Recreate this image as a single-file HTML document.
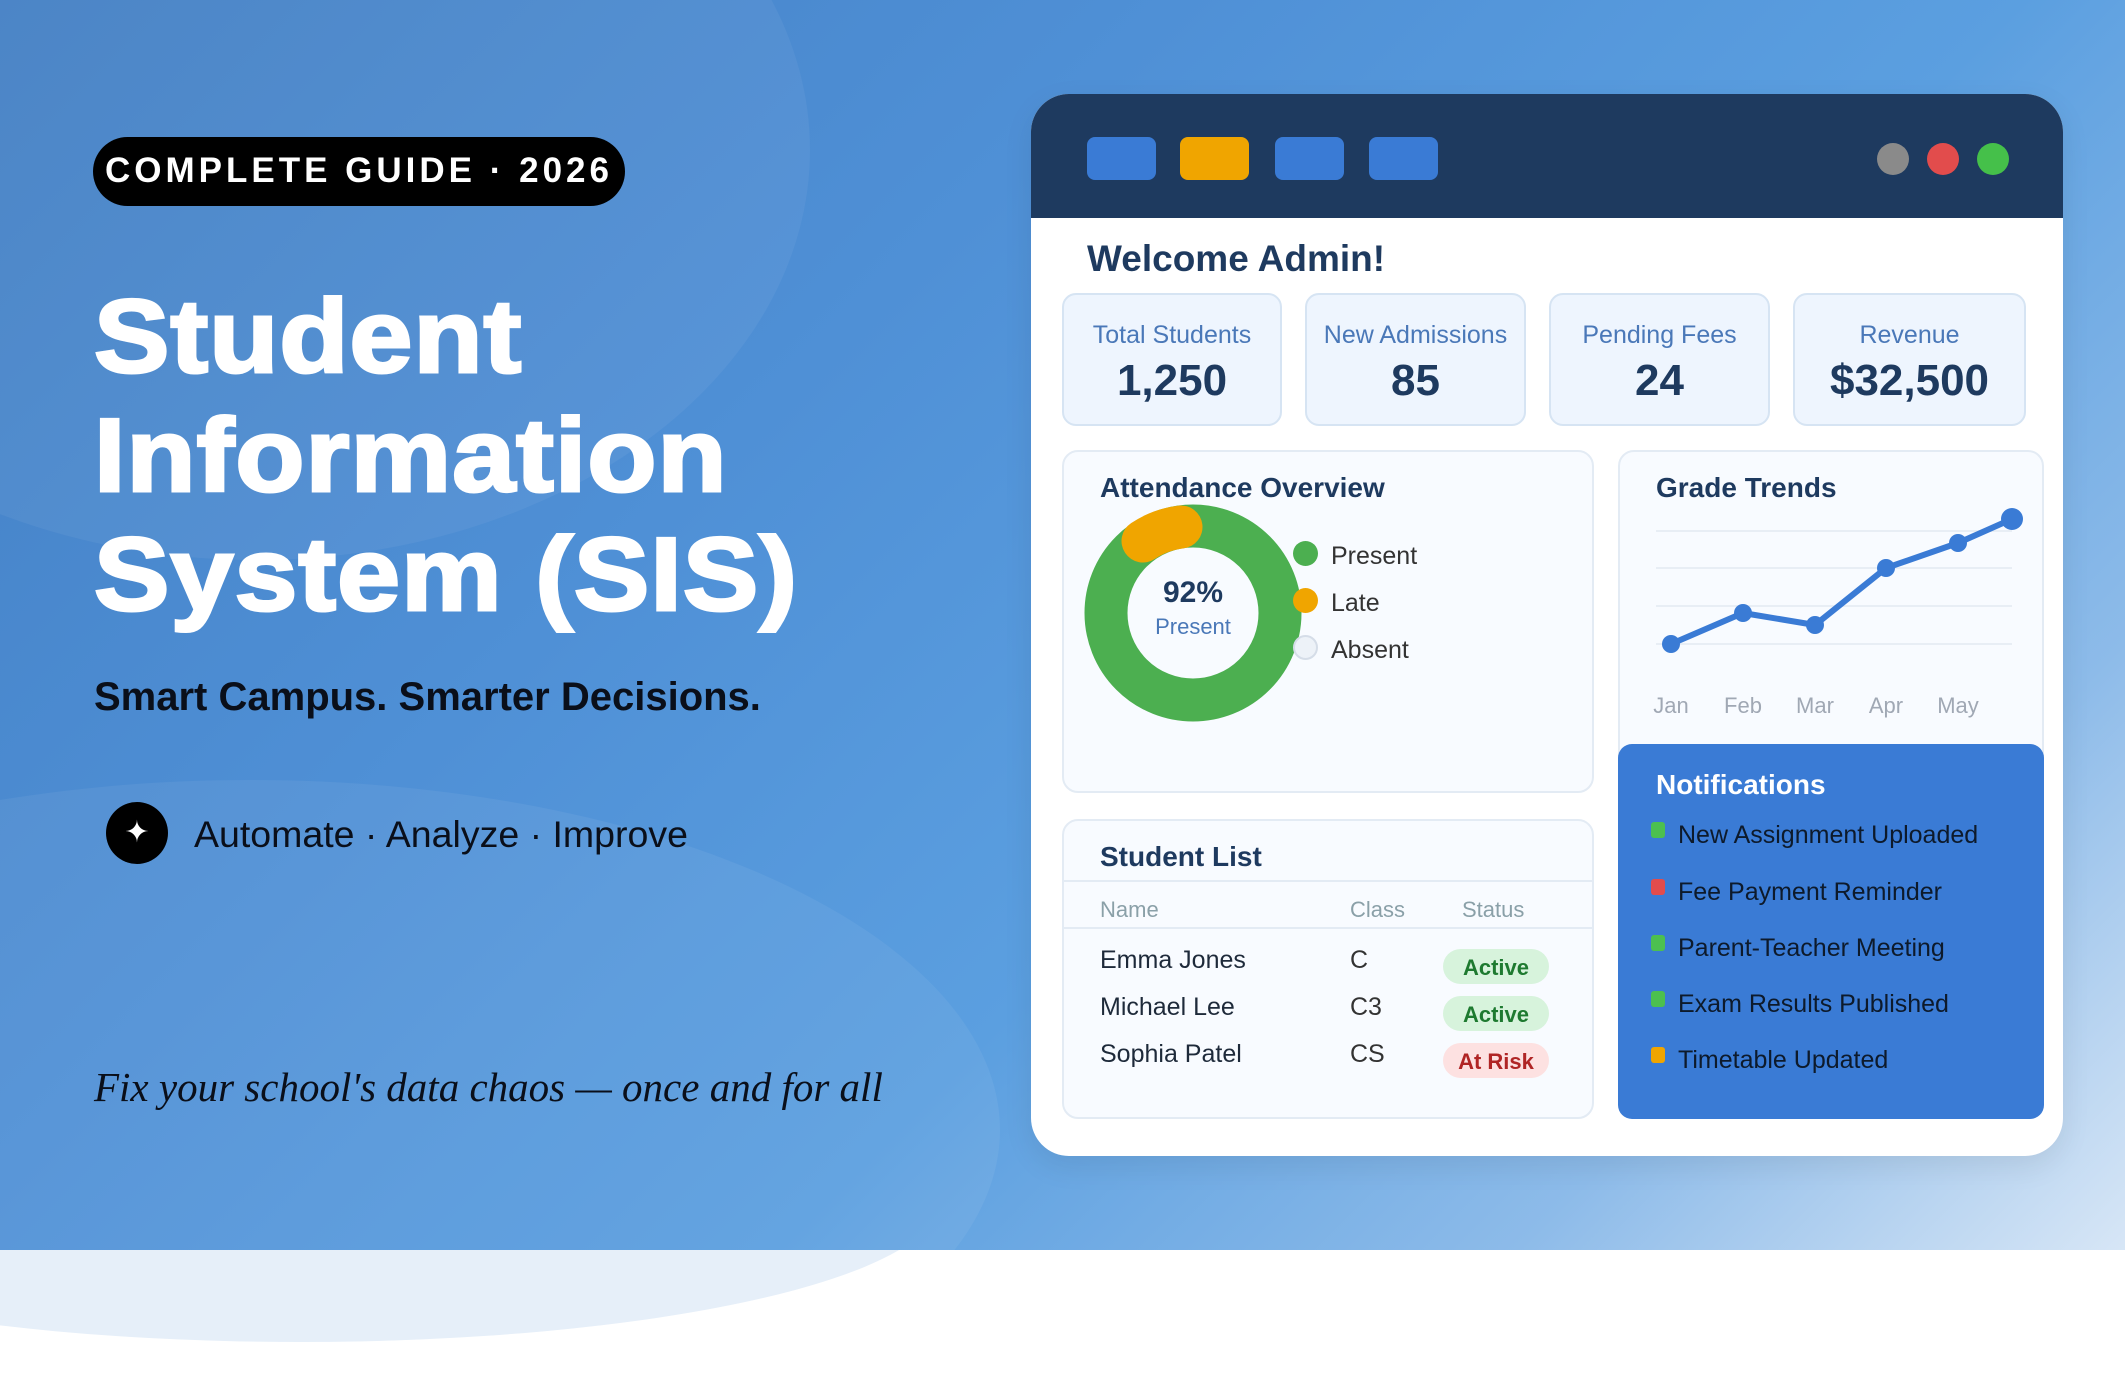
<!DOCTYPE html>
<html><head><meta charset="utf-8"><style>
*{margin:0;padding:0;box-sizing:border-box}
html,body{width:2125px;height:1375px;overflow:hidden}
body{position:relative;background:#fff;font-family:"Liberation Sans",Arial,sans-serif}
.abs{position:absolute}
#bg{left:0;top:0;width:2125px;height:1250px;overflow:hidden;background:linear-gradient(135deg,#437fc4 0%,#4f90d6 35%,#5b9fe0 60%,#8dbbe9 82%,#d7e6f6 100%)}
.t{position:absolute;white-space:nowrap}
.card{position:absolute;background:#f8fbff;border:2px solid #e3ebf4;border-radius:16px}
.stat{position:absolute;top:293px;height:133px;background:#eef5fe;border:2px solid #d6e4f3;border-radius:14px;text-align:center}
.stat .l{margin-top:26px;font-size:25px;color:#4a78b8}
.stat .v{margin-top:6px;font-size:44px;font-weight:bold;color:#1e3a5f}
.badge{position:absolute;left:1443px;width:106px;height:35px;border-radius:18px;font-size:22px;font-weight:bold;text-align:center;line-height:37px}
.nb{position:absolute;left:1651px;width:14px;height:16px;border-radius:3px}
.nt{position:absolute;left:1678px;font-size:25px;color:#0d1a2b;white-space:nowrap}
</style></head><body>
<div class="abs" style="left:-340px;top:1058px;width:1280px;height:284px;border-radius:50%;background:#e6eff9"></div>
<div id="bg" class="abs">
 <div class="abs" style="left:-300px;top:-260px;width:1110px;height:820px;border-radius:50%;background:rgba(255,255,255,0.05)"></div>
 <div class="abs" style="left:-500px;top:780px;width:1500px;height:700px;border-radius:50%;background:rgba(255,255,255,0.06)"></div>
</div>

<div class="abs" style="left:93px;top:137px;width:532px;height:69px;border-radius:35px;background:#000"></div>
<div class="t" style="left:105px;top:151px;font-size:35px;font-weight:bold;color:#fff;letter-spacing:4px">COMPLETE GUIDE · 2026</div>

<div class="t" style="left:94px;top:278px;font-size:104px;line-height:119px;font-weight:bold;color:#fff;-webkit-text-stroke:3px #fff;letter-spacing:1px;transform:scaleX(1.087);transform-origin:0 0">Student<br>Information<br>System (SIS)</div>

<div class="t" style="left:94px;top:675px;font-size:40px;font-weight:bold;color:#0a0f1a">Smart Campus. Smarter Decisions.</div>
<div class="abs" style="left:106px;top:802px;width:62px;height:62px;border-radius:50%;background:#000;color:#fff;font-size:30px;text-align:center;line-height:62px">✦</div>
<div class="t" style="left:194px;top:813px;font-size:37.5px;color:#0a0f1a">Automate · Analyze · Improve</div>
<div class="t" style="left:94px;top:1063px;font-size:41px;font-style:italic;font-family:'Liberation Serif',serif;color:#0a0f1a">Fix your school's data chaos — once and for all</div>

<!-- dashboard -->
<div class="abs" style="left:1031px;top:94px;width:1032px;height:1062px;border-radius:38px;background:#fff;overflow:hidden;box-shadow:0 10px 30px rgba(0,0,0,0.08)">
 <div class="abs" style="left:0;top:0;width:1032px;height:124px;background:#1e3a5f"></div>
</div>
<div class="abs" style="left:1087px;top:137px;width:69px;height:43px;border-radius:8px;background:#3a7bd5"></div>
<div class="abs" style="left:1180px;top:137px;width:69px;height:43px;border-radius:8px;background:#f0a500"></div>
<div class="abs" style="left:1275px;top:137px;width:69px;height:43px;border-radius:8px;background:#3a7bd5"></div>
<div class="abs" style="left:1369px;top:137px;width:69px;height:43px;border-radius:8px;background:#3a7bd5"></div>
<div class="abs" style="left:1877px;top:143px;width:32px;height:32px;border-radius:50%;background:#8a8a8a"></div>
<div class="abs" style="left:1927px;top:143px;width:32px;height:32px;border-radius:50%;background:#e24c4c"></div>
<div class="abs" style="left:1977px;top:143px;width:32px;height:32px;border-radius:50%;background:#45c04a"></div>

<div class="t" style="left:1087px;top:238px;font-size:37px;font-weight:bold;color:#1e3a5f">Welcome Admin!</div>

<div class="stat" style="left:1062px;width:220px"><div class="l">Total Students</div><div class="v">1,250</div></div>
<div class="stat" style="left:1305px;width:221px"><div class="l">New Admissions</div><div class="v">85</div></div>
<div class="stat" style="left:1549px;width:221px"><div class="l">Pending Fees</div><div class="v">24</div></div>
<div class="stat" style="left:1793px;width:233px"><div class="l">Revenue</div><div class="v">$32,500</div></div>

<!-- attendance -->
<div class="card" style="left:1062px;top:450px;width:532px;height:343px"></div>
<div class="t" style="left:1100px;top:472px;font-size:28px;font-weight:bold;color:#1e3a5f">Attendance Overview</div>
<svg class="abs" style="left:1073px;top:493px" width="240" height="240" viewBox="0 0 240 240">
 <circle cx="120" cy="120" r="87" fill="none" stroke="#4caf50" stroke-width="43"/>
 <path d="M 70 48 A 87 87 0 0 1 108 34" fill="none" stroke="#f0a500" stroke-width="43" stroke-linecap="round"/>
</svg>
<div class="t" style="left:1133px;top:576px;width:120px;text-align:center;font-size:30px;font-weight:bold;color:#1e3a5f">92%</div>
<div class="t" style="left:1133px;top:614px;width:120px;text-align:center;font-size:22px;color:#4a78b8">Present</div>
<div class="abs" style="left:1293px;top:541px;width:25px;height:25px;border-radius:50%;background:#4caf50"></div>
<div class="abs" style="left:1293px;top:588px;width:25px;height:25px;border-radius:50%;background:#f0a500"></div>
<div class="abs" style="left:1293px;top:635px;width:25px;height:25px;border-radius:50%;background:#edf2f8;border:2px solid #d5dde8"></div>
<div class="t" style="left:1331px;top:542px;font-size:25px;color:#333">Present</div>
<div class="t" style="left:1331px;top:589px;font-size:25px;color:#333">Late</div>
<div class="t" style="left:1331px;top:636px;font-size:25px;color:#333">Absent</div>

<!-- grade trends -->
<div class="card" style="left:1618px;top:450px;width:426px;height:360px"></div>
<div class="t" style="left:1656px;top:472px;font-size:28px;font-weight:bold;color:#1e3a5f">Grade Trends</div>
<svg class="abs" style="left:0;top:0" width="2125" height="760">
 <g stroke="#e8eef5" stroke-width="2"><line x1="1656" y1="531" x2="2012" y2="531"/><line x1="1656" y1="568" x2="2012" y2="568"/><line x1="1656" y1="606" x2="2012" y2="606"/><line x1="1656" y1="644" x2="2012" y2="644"/></g>
 <polyline points="1671,644 1743,613 1815,625 1886,568 1958,543 2012,519" fill="none" stroke="#3a7bd5" stroke-width="6" stroke-linejoin="round"/>
 <g fill="#3a7bd5"><circle cx="1671" cy="644" r="9"/><circle cx="1743" cy="613" r="9"/><circle cx="1815" cy="625" r="9"/><circle cx="1886" cy="568" r="9"/><circle cx="1958" cy="543" r="9"/><circle cx="2012" cy="519" r="11"/></g>
 <g font-family="Liberation Sans" font-size="22" fill="#a0a8b4" text-anchor="middle"><text x="1671" y="713">Jan</text><text x="1743" y="713">Feb</text><text x="1815" y="713">Mar</text><text x="1886" y="713">Apr</text><text x="1958" y="713">May</text></g>
</svg>

<!-- notifications -->
<div class="abs" style="left:1618px;top:744px;width:426px;height:375px;border-radius:14px;background:#3a7bd5"></div>
<div class="t" style="left:1656px;top:769px;font-size:28px;font-weight:bold;color:#fff">Notifications</div>
<div class="nb" style="top:822px;background:#4cc04f"></div><div class="nt" style="top:821px">New Assignment Uploaded</div>
<div class="nb" style="top:879px;background:#e24c4c"></div><div class="nt" style="top:878px">Fee Payment Reminder</div>
<div class="nb" style="top:935px;background:#4cc04f"></div><div class="nt" style="top:934px">Parent-Teacher Meeting</div>
<div class="nb" style="top:991px;background:#4cc04f"></div><div class="nt" style="top:990px">Exam Results Published</div>
<div class="nb" style="top:1047px;background:#f0a500"></div><div class="nt" style="top:1046px">Timetable Updated</div>

<!-- student list -->
<div class="card" style="left:1062px;top:819px;width:532px;height:300px"></div>
<div class="t" style="left:1100px;top:841px;font-size:28px;font-weight:bold;color:#1e3a5f">Student List</div>
<div class="abs" style="left:1063px;top:880px;width:530px;height:2px;background:#e3ebf4"></div>
<div class="abs" style="left:1063px;top:927px;width:530px;height:2px;background:#e3ebf4"></div>
<div class="t" style="left:1100px;top:897px;font-size:22px;color:#8aa0a8">Name</div>
<div class="t" style="left:1350px;top:897px;font-size:22px;color:#8aa0a8">Class</div>
<div class="t" style="left:1462px;top:897px;font-size:22px;color:#8aa0a8">Status</div>
<div class="t" style="left:1100px;top:946px;font-size:25px;color:#1e2a3a">Emma Jones</div>
<div class="t" style="left:1350px;top:946px;font-size:25px;color:#333">C</div>
<div class="t" style="left:1100px;top:993px;font-size:25px;color:#1e2a3a">Michael Lee</div>
<div class="t" style="left:1350px;top:993px;font-size:25px;color:#333">C3</div>
<div class="t" style="left:1100px;top:1040px;font-size:25px;color:#1e2a3a">Sophia Patel</div>
<div class="t" style="left:1350px;top:1040px;font-size:25px;color:#333">CS</div>
<div class="badge" style="top:949px;background:#d7f3dc;color:#1e7a30">Active</div>
<div class="badge" style="top:996px;background:#d7f3dc;color:#1e7a30">Active</div>
<div class="badge" style="top:1043px;background:#fde1e1;color:#b02525">At Risk</div>
</body></html>
